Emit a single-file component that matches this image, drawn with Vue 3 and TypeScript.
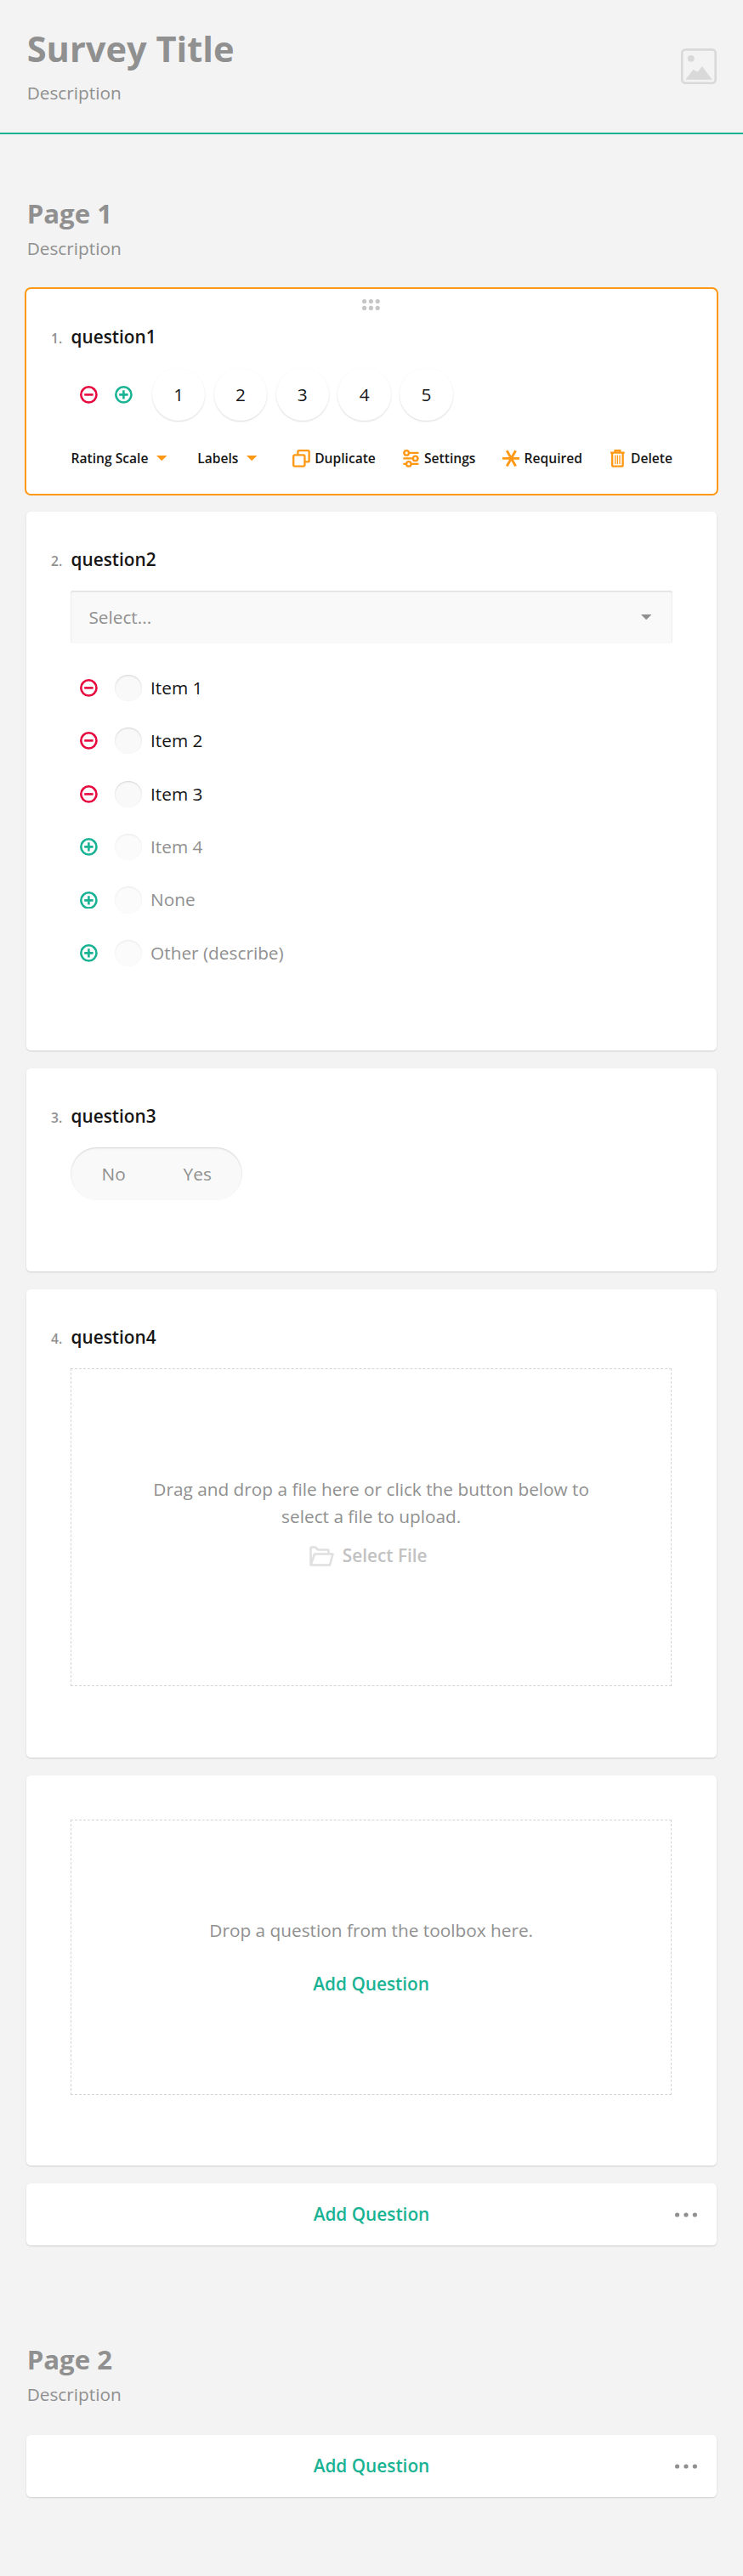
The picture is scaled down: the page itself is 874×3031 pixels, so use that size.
<script setup lang="ts">
interface Choice {
  label: string
  active: boolean
}

const ratings: number[] = [1, 2, 3, 4, 5]

const choices: Choice[] = [
  { label: 'Item 1', active: true },
  { label: 'Item 2', active: true },
  { label: 'Item 3', active: true },
  { label: 'Item 4', active: false },
  { label: 'None', active: false },
  { label: 'Other (describe)', active: false },
]
</script>

<template>
  <main class="designer">
    <header class="survey-header">
      <div class="heading">
        <h1>Survey Title</h1>
        <p class="description">Description</p>
      </div>
      <svg class="logo" viewBox="0 0 32 32">
        <rect x="1" y="1" width="30" height="30" rx="3" fill="none" stroke="currentColor" stroke-width="2" />
        <circle cx="9" cy="9" r="3" />
        <path d="M4 28 11 19 15 21 19 16 28 28Z" />
      </svg>
    </header>

    <section class="page">
      <div class="heading">
        <h2>Page 1</h2>
        <p class="description">Description</p>
      </div>

      <article class="card selected q1">
        <svg class="drag" viewBox="0 0 21 13">
          <circle v-for="n in 6" :key="n" :cx="2.6 + ((n - 1) % 3) * 7.8" :cy="2.6 + (n > 3 ? 7.8 : 0)" r="2.6" />
        </svg>
        <h3><span class="num">1.</span>question1</h3>
        <div class="rating">
          <svg class="icon red" viewBox="0 0 16 16">
            <circle cx="8" cy="8" r="7" /><path d="M4 8h8" />
          </svg>
          <svg class="icon green" viewBox="0 0 16 16">
            <circle cx="8" cy="8" r="7" /><path d="M4 8h8M8 4v8" />
          </svg>
          <div class="rates">
            <span v-for="r in ratings" :key="r" class="rate">{{ r }}</span>
          </div>
        </div>
        <div class="toolbar">
          <span class="drop">Rating Scale<svg class="arrow" viewBox="0 0 12 6"><path d="M0 0h12L6 6z" /></svg></span>
          <span class="drop">Labels<svg class="arrow" viewBox="0 0 12 6"><path d="M0 0h12L6 6z" /></svg></span>
          <div class="actions">
            <span class="action">
              <svg class="tool" viewBox="0 0 16 16">
                <rect x=".9" y="4.9" width="10.2" height="10.2" rx="1.2" />
                <path d="M4.9 4.5V2Q4.9.9 6 .9H14Q15.1.9 15.1 2V10Q15.1 11.1 14 11.1H11.5" />
              </svg>Duplicate
            </span>
            <span class="action">
              <svg class="tool" viewBox="0 0 16 16">
                <circle cx="4" cy="3" r="2.1" /><circle cx="12" cy="8" r="2.1" /><circle cx="6" cy="13" r="2.1" />
                <path d="M6 3H15M1 8H10M1 13H4M8 13H15M1 3H2M14 8H15" />
              </svg>Settings
            </span>
            <span class="action">
              <svg class="tool star" viewBox="0 0 16 16">
                <path d="M0 8H16M4 1 12 15M12 1 4 15" />
              </svg>Required
            </span>
            <span class="action">
              <svg class="tool" viewBox="0 0 16 16">
                <path d="M1.6 2.8H14.4M5.8 2.5V.8H10.2V2.5M3.2 3V14Q3.2 15.1 4.3 15.1H11.7Q12.8 15.1 12.8 14V3" />
                <path class="thin" d="M6 5V13M8 5V13M10 5V13" />
              </svg>Delete
            </span>
          </div>
        </div>
      </article>

      <article class="card q2">
        <h3><span class="num">2.</span>question2</h3>
        <div class="select">
          Select...
          <svg class="arrow" viewBox="0 0 12 6"><path d="M0 0h12L6 6z" /></svg>
        </div>
        <ul>
          <li v-for="c in choices" :key="c.label" :class="{ inactive: !c.active }">
            <svg class="icon" :class="c.active ? 'red' : 'green'" viewBox="0 0 16 16">
              <circle cx="8" cy="8" r="7" />
              <path :d="c.active ? 'M4 8h8' : 'M4 8h8M8 4v8'" />
            </svg>
            <span class="radio"></span>{{ c.label }}
          </li>
        </ul>
      </article>

      <article class="card q3">
        <h3><span class="num">3.</span>question3</h3>
        <div class="toggle"><span>No</span><span>Yes</span></div>
      </article>

      <article class="card q4">
        <h3><span class="num">4.</span>question4</h3>
        <div class="dropzone upload">
          <p>Drag and drop a file here or click the button below to select a file to upload.</p>
          <div class="file">
            <svg viewBox="0 0 29 24">
              <path d="M1.5 22.5V2.5Q1.5 1.5 2.5 1.5H7L10 4.5H21.5Q22.5 4.5 22.5 5.5V9.5M1.5 22.5 6 9.5H27.5L24 22.5Z" />
            </svg>
            Select File
          </div>
        </div>
      </article>

      <article class="card empty">
        <div class="dropzone toolbox">
          <p>Drop a question from the toolbox here.</p>
          <span class="add">Add Question</span>
        </div>
      </article>

      <div class="card add-bar">
        <span class="add">Add Question</span>
        <svg class="dots" viewBox="0 0 26 6"><circle cx="2.6" cy="3" r="2.6" /><circle cx="13" cy="3" r="2.6" /><circle cx="23.4" cy="3" r="2.6" /></svg>
      </div>
    </section>

    <section class="page second">
      <div class="heading">
        <h2>Page 2</h2>
        <p class="description">Description</p>
      </div>
      <div class="card add-bar">
        <span class="add">Add Question</span>
        <svg class="dots" viewBox="0 0 26 6"><circle cx="2.6" cy="3" r="2.6" /><circle cx="13" cy="3" r="2.6" /><circle cx="23.4" cy="3" r="2.6" /></svg>
      </div>
    </section>
  </main>
</template>

<style>
body {
  background: #f3f3f3;
}
</style>

<style scoped>
.designer {
  box-sizing: border-box;
  height: 3031px;
  background: #f3f3f3;
  color: #161616;
  font: 400 20.8px/31.2px "Open Sans", "Noto Sans", sans-serif;
}
h1, h2, h3, p, ul {
  margin: 0;
  padding: 0;
}
svg {
  display: block;
  flex: none;
}
.survey-header {
  box-sizing: border-box;
  height: 158px;
  padding: 31px 31px 0;
  border-bottom: 2px solid #19b394;
  display: flex;
  justify-content: space-between;
}
.heading {
  padding-left: 0.7px;
  color: #909090;
}
h1 {
  font-size: 41.6px;
  line-height: 52px;
  margin-bottom: 11px;
}
.logo {
  width: 42px;
  height: 42px;
  margin-top: 26px;
  color: #d9d9d9;
  fill: currentColor;
}
.page {
  padding: 72px 31px 0;
}
.page.second {
  padding-top: 113px;
}
h2 {
  font-size: 31.2px;
  line-height: 42px;
  margin-bottom: 5px;
}
.description {
  height: 31px;
}
.page > .heading {
  margin-bottom: 32px;
}
.card {
  position: relative;
  box-sizing: border-box;
  background: #fff;
  border-radius: 5.2px;
  box-shadow: 0 1px 2px rgba(0, 0, 0, 0.15);
  padding: 41px 52px 0 52.2px;
  margin-bottom: 21px;
}
.selected {
  box-shadow: 0 0 0 2px #ff9814;
}
.q1 { height: 241px; }
.q2 { height: 634px; }
.q3 { height: 239px; }
.q4 { height: 551px; }
.empty { height: 459px; padding-top: 52px; }
.drag {
  position: absolute;
  top: 12px;
  left: 395px;
  width: 21px;
  height: 13px;
  fill: #c6c6c6;
}
h3 {
  display: flex;
  align-items: baseline;
  height: 31px;
  margin-bottom: 21px;
  padding-left: 0.4px;
  font-size: 20.8px;
  font-weight: 600;
}
.num {
  width: 42px;
  margin-left: -42px;
  padding-right: 10.4px;
  box-sizing: border-box;
  text-align: right;
  font-size: 15.6px;
  color: #909090;
}
.icon {
  width: 20.8px;
  height: 20.8px;
  fill: none;
  stroke: currentColor;
  stroke-width: 2;
}
.red { color: #e60a3e; }
.green { color: #19b394; }
.rating {
  display: flex;
  align-items: center;
  gap: 20.3px;
  padding-left: 10.7px;
}
.rates {
  display: flex;
  gap: 10.4px;
  margin-left: 3px;
}
.rate {
  width: 62.4px;
  height: 62.4px;
  border-radius: 50%;
  line-height: 62.4px;
  text-align: center;
  box-shadow: 0 1px 2px rgba(0, 0, 0, 0.15);
}
.toolbar {
  display: flex;
  align-items: center;
  margin-top: 33.6px;
  height: 21px;
  padding-left: 0.4px;
  font-size: 15.6px;
  font-weight: 600;
  line-height: 21px;
}
.drop {
  display: flex;
  align-items: center;
  gap: 9.5px;
  margin-right: 36px;
}
.arrow {
  width: 12.4px;
  height: 6.4px;
  fill: #ff9814;
}
.actions {
  display: flex;
  gap: 31.2px;
  margin-left: auto;
}
.action {
  display: flex;
  align-items: center;
  gap: 5.2px;
}
.tool {
  width: 20.8px;
  height: 20.8px;
  fill: none;
  stroke: #ff9814;
  stroke-width: 1.8;
}
.star { stroke-width: 2.2; }
.thin { stroke-width: 1; }
.select {
  box-sizing: border-box;
  display: flex;
  align-items: center;
  justify-content: space-between;
  height: 62.4px;
  padding: 0 25px 0 21.2px;
  border-radius: 3px;
  background: #f9f9f9;
  box-shadow: inset 0 1px 2px rgba(0, 0, 0, 0.15);
  color: #909090;
}
.select .arrow { fill: #909090; }
ul {
  list-style: none;
  margin-top: 20.8px;
}
li {
  display: flex;
  align-items: center;
  height: 62.4px;
  padding-left: 10.7px;
}
.radio {
  width: 31.2px;
  height: 31.2px;
  margin: 0 10.4px 0 20.8px;
  border-radius: 50%;
  background: #f9f9f9;
  box-shadow: inset 0 1px 2px rgba(0, 0, 0, 0.15);
}
.inactive { color: #909090; }
.inactive .radio { opacity: 0.5; }
.toggle {
  box-sizing: border-box;
  display: flex;
  align-items: center;
  justify-content: space-between;
  width: 202px;
  height: 62.4px;
  padding: 0 36.4px;
  border-radius: 32px;
  background: #f9f9f9;
  box-shadow: inset 0 1px 2px rgba(0, 0, 0, 0.15);
  color: #909090;
}
.dropzone {
  box-sizing: border-box;
  width: 707px;
  border: 1px dashed #d4d4d4;
  display: flex;
  flex-direction: column;
  align-items: center;
  text-align: center;
  color: #909090;
}
.upload {
  height: 374px;
  padding-top: 125px;
}
.upload p {
  width: 540px;
  line-height: 32px;
}
.file {
  display: flex;
  align-items: center;
  gap: 10px;
  margin-top: 15px;
  padding-right: 7px;
  font-weight: 600;
  color: #c2c2c2;
}
.file svg {
  width: 29px;
  height: 24px;
  fill: none;
  stroke: #e0e0e0;
  stroke-width: 2.6;
  stroke-linejoin: round;
}
.toolbox {
  height: 324px;
  padding-top: 114px;
}
.toolbox .add {
  margin-top: 32px;
}
.add {
  font-weight: 600;
  color: #19b394;
}
.add-bar {
  display: flex;
  align-items: center;
  justify-content: center;
  height: 73px;
  padding: 0;
  margin-bottom: 0;
}
.dots {
  position: absolute;
  right: 23.5px;
  width: 26px;
  height: 6px;
  fill: #909090;
}
</style>
